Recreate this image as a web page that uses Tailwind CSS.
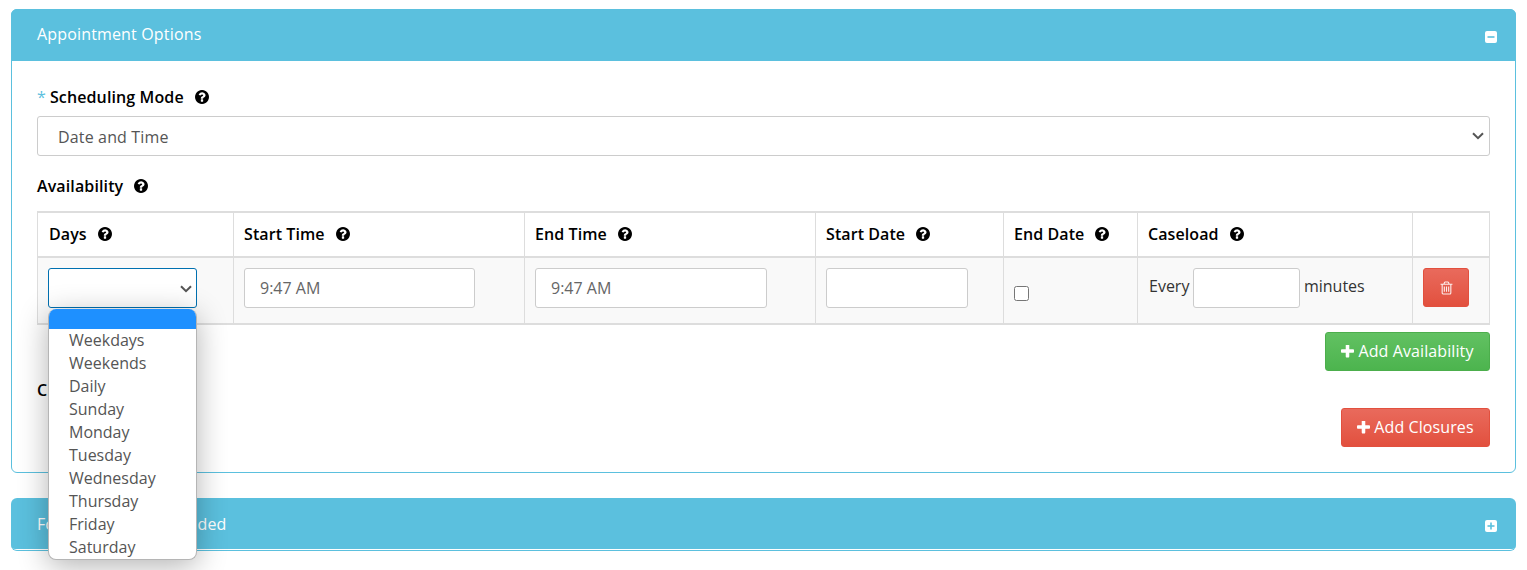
<!DOCTYPE html>
<html>
<head>
<meta charset="utf-8">
<script src="https://cdn.jsdelivr.net/npm/@tailwindcss/browser@4"></script>
</head>
<body class="bg-white font-['Open_Sans',sans-serif] text-[16px] text-black">
<div class="relative h-[570px] overflow-hidden px-[11px] pt-[9px]">

  <section class="w-[1505px] rounded-[6px] border border-[#5bc0de]">
    <header class="-m-px flex h-[52px] items-center justify-between rounded-t-[6px] bg-[#5bc0de] pb-[2px] pl-[26px] pr-[19px] text-white">
      <span class="tracking-[0.16px]">Appointment Options</span>
      <svg class="mt-[5px]" width="12" height="12" viewBox="0 0 12 12"><rect width="12" height="12" rx="2" fill="#fff"/><rect x="2.5" y="5.2" width="7" height="1.6" fill="#5bc0de"/></svg>
    </header>
    <div class="px-[25px] pt-[1px]">
      <div class="mt-[25px] flex h-[22px] items-center font-[550] tracking-[0.12px]">
        <span class="mr-[4px] font-normal text-[#5bc0de]">*</span>
        <span>Scheduling Mode</span>
        <svg class="ml-[11px]" width="14" height="14" viewBox="128 128 1536 1536"><path fill="#000" d="M1024 1376v-192q0-14-9-23t-23-9h-192q-14 0-23 9t-9 23v192q0 14 9 23t23 9h192q14 0 23-9t9-23zm256-672q0-88-55.5-163t-138.5-116-170-41q-243 0-371 213-15 24 8 42l132 100q7 6 19 6 16 0 25-12 53-68 86-92 34-24 86-24 48 0 85.5 26t37.5 59q0 38-20 61t-68 45q-63 28-115.5 86.5t-52.5 125.5v36q0 14 9 23t23 9h192q14 0 23-9t9-23q0-19 21.5-49.5t54.5-49.5q32-18 49-28.5t46-35 44.5-48 28-60.5 12.5-81zm384 192q0 209-103 385.5t-279.5 279.5-385.5 103-385.5-103-279.5-279.5-103-385.5 103-385.5 279.5-279.5 385.5-103 385.5 103 279.5 279.5 103 385.5z"/></svg>
      </div>
      <div class="relative mt-[8px] w-[1453px]">
        <select class="block h-[40px] w-full appearance-none rounded-[3px] border border-[#ccc] bg-white pl-[20px] pt-[2px] tracking-[0.15px] text-[#555]">
          <option>Date and Time</option>
        </select>
        <svg class="pointer-events-none absolute right-[6px] top-[16px]" width="12" height="8" viewBox="0 0 12 8"><path d="M1 1.2 6 6.2 11 1.2" fill="none" stroke="#555" stroke-width="2"/></svg>
      </div>
      <div class="mt-[19px] flex h-[22px] items-center font-[550] tracking-[0.12px]">
        <span>Availability</span>
        <svg class="ml-[11px]" width="14" height="14" viewBox="128 128 1536 1536"><path fill="#000" d="M1024 1376v-192q0-14-9-23t-23-9h-192q-14 0-23 9t-9 23v192q0 14 9 23t23 9h192q14 0 23-9t9-23zm256-672q0-88-55.5-163t-138.5-116-170-41q-243 0-371 213-15 24 8 42l132 100q7 6 19 6 16 0 25-12 53-68 86-92 34-24 86-24 48 0 85.5 26t37.5 59q0 38-20 61t-68 45q-63 28-115.5 86.5t-52.5 125.5v36q0 14 9 23t23 9h192q14 0 23-9t9-23q0-19 21.5-49.5t54.5-49.5q32-18 49-28.5t46-35 44.5-48 28-60.5 12.5-81zm384 192q0 209-103 385.5t-279.5 279.5-385.5 103-385.5-103-279.5-279.5-103-385.5 103-385.5 279.5-279.5 385.5-103 385.5 103 279.5 279.5 103 385.5z"/></svg>
      </div>

      <table class="mt-[14px] w-[1452px] table-fixed border-collapse">
        <colgroup>
          <col class="w-[196px]"><col class="w-[291px]"><col class="w-[291px]"><col class="w-[188px]"><col class="w-[134px]"><col class="w-[275px]"><col class="w-[77px]">
        </colgroup>
        <thead>
          <tr class="h-[45px] text-left tracking-[0.08px]">
            <th class="border-x border-t-2 border-b-2 border-[#ddd] pb-px pl-[11px] font-[550]"><span class="inline-flex items-center">Days<svg class="ml-[11px]" width="14" height="14" viewBox="128 128 1536 1536"><path fill="#000" d="M1024 1376v-192q0-14-9-23t-23-9h-192q-14 0-23 9t-9 23v192q0 14 9 23t23 9h192q14 0 23-9t9-23zm256-672q0-88-55.5-163t-138.5-116-170-41q-243 0-371 213-15 24 8 42l132 100q7 6 19 6 16 0 25-12 53-68 86-92 34-24 86-24 48 0 85.5 26t37.5 59q0 38-20 61t-68 45q-63 28-115.5 86.5t-52.5 125.5v36q0 14 9 23t23 9h192q14 0 23-9t9-23q0-19 21.5-49.5t54.5-49.5q32-18 49-28.5t46-35 44.5-48 28-60.5 12.5-81zm384 192q0 209-103 385.5t-279.5 279.5-385.5 103-385.5-103-279.5-279.5-103-385.5 103-385.5 279.5-279.5 385.5-103 385.5 103 279.5 279.5 103 385.5z"/></svg></span></th>
            <th class="border-x border-t-2 border-b-2 border-[#ddd] pb-px pl-[10px] font-[550]"><span class="inline-flex items-center">Start Time<svg class="ml-[11px]" width="14" height="14" viewBox="128 128 1536 1536"><path fill="#000" d="M1024 1376v-192q0-14-9-23t-23-9h-192q-14 0-23 9t-9 23v192q0 14 9 23t23 9h192q14 0 23-9t9-23zm256-672q0-88-55.5-163t-138.5-116-170-41q-243 0-371 213-15 24 8 42l132 100q7 6 19 6 16 0 25-12 53-68 86-92 34-24 86-24 48 0 85.5 26t37.5 59q0 38-20 61t-68 45q-63 28-115.5 86.5t-52.5 125.5v36q0 14 9 23t23 9h192q14 0 23-9t9-23q0-19 21.5-49.5t54.5-49.5q32-18 49-28.5t46-35 44.5-48 28-60.5 12.5-81zm384 192q0 209-103 385.5t-279.5 279.5-385.5 103-385.5-103-279.5-279.5-103-385.5 103-385.5 279.5-279.5 385.5-103 385.5 103 279.5 279.5 103 385.5z"/></svg></span></th>
            <th class="border-x border-t-2 border-b-2 border-[#ddd] pb-px pl-[10px] font-[550]"><span class="inline-flex items-center">End Time<svg class="ml-[11px]" width="14" height="14" viewBox="128 128 1536 1536"><path fill="#000" d="M1024 1376v-192q0-14-9-23t-23-9h-192q-14 0-23 9t-9 23v192q0 14 9 23t23 9h192q14 0 23-9t9-23zm256-672q0-88-55.5-163t-138.5-116-170-41q-243 0-371 213-15 24 8 42l132 100q7 6 19 6 16 0 25-12 53-68 86-92 34-24 86-24 48 0 85.5 26t37.5 59q0 38-20 61t-68 45q-63 28-115.5 86.5t-52.5 125.5v36q0 14 9 23t23 9h192q14 0 23-9t9-23q0-19 21.5-49.5t54.5-49.5q32-18 49-28.5t46-35 44.5-48 28-60.5 12.5-81zm384 192q0 209-103 385.5t-279.5 279.5-385.5 103-385.5-103-279.5-279.5-103-385.5 103-385.5 279.5-279.5 385.5-103 385.5 103 279.5 279.5 103 385.5z"/></svg></span></th>
            <th class="border-x border-t-2 border-b-2 border-[#ddd] pb-px pl-[10px] font-[550]"><span class="inline-flex items-center">Start Date<svg class="ml-[11px]" width="14" height="14" viewBox="128 128 1536 1536"><path fill="#000" d="M1024 1376v-192q0-14-9-23t-23-9h-192q-14 0-23 9t-9 23v192q0 14 9 23t23 9h192q14 0 23-9t9-23zm256-672q0-88-55.5-163t-138.5-116-170-41q-243 0-371 213-15 24 8 42l132 100q7 6 19 6 16 0 25-12 53-68 86-92 34-24 86-24 48 0 85.5 26t37.5 59q0 38-20 61t-68 45q-63 28-115.5 86.5t-52.5 125.5v36q0 14 9 23t23 9h192q14 0 23-9t9-23q0-19 21.5-49.5t54.5-49.5q32-18 49-28.5t46-35 44.5-48 28-60.5 12.5-81zm384 192q0 209-103 385.5t-279.5 279.5-385.5 103-385.5-103-279.5-279.5-103-385.5 103-385.5 279.5-279.5 385.5-103 385.5 103 279.5 279.5 103 385.5z"/></svg></span></th>
            <th class="border-x border-t-2 border-b-2 border-[#ddd] pb-px pl-[10px] font-[550]"><span class="inline-flex items-center">End Date<svg class="ml-[11px]" width="14" height="14" viewBox="128 128 1536 1536"><path fill="#000" d="M1024 1376v-192q0-14-9-23t-23-9h-192q-14 0-23 9t-9 23v192q0 14 9 23t23 9h192q14 0 23-9t9-23zm256-672q0-88-55.5-163t-138.5-116-170-41q-243 0-371 213-15 24 8 42l132 100q7 6 19 6 16 0 25-12 53-68 86-92 34-24 86-24 48 0 85.5 26t37.5 59q0 38-20 61t-68 45q-63 28-115.5 86.5t-52.5 125.5v36q0 14 9 23t23 9h192q14 0 23-9t9-23q0-19 21.5-49.5t54.5-49.5q32-18 49-28.5t46-35 44.5-48 28-60.5 12.5-81zm384 192q0 209-103 385.5t-279.5 279.5-385.5 103-385.5-103-279.5-279.5-103-385.5 103-385.5 279.5-279.5 385.5-103 385.5 103 279.5 279.5 103 385.5z"/></svg></span></th>
            <th class="border-x border-t-2 border-b-2 border-[#ddd] pb-px pl-[10px] font-[550]"><span class="inline-flex items-center">Caseload<svg class="ml-[11px]" width="14" height="14" viewBox="128 128 1536 1536"><path fill="#000" d="M1024 1376v-192q0-14-9-23t-23-9h-192q-14 0-23 9t-9 23v192q0 14 9 23t23 9h192q14 0 23-9t9-23zm256-672q0-88-55.5-163t-138.5-116-170-41q-243 0-371 213-15 24 8 42l132 100q7 6 19 6 16 0 25-12 53-68 86-92 34-24 86-24 48 0 85.5 26t37.5 59q0 38-20 61t-68 45q-63 28-115.5 86.5t-52.5 125.5v36q0 14 9 23t23 9h192q14 0 23-9t9-23q0-19 21.5-49.5t54.5-49.5q32-18 49-28.5t46-35 44.5-48 28-60.5 12.5-81zm384 192q0 209-103 385.5t-279.5 279.5-385.5 103-385.5-103-279.5-279.5-103-385.5 103-385.5 279.5-279.5 385.5-103 385.5 103 279.5 279.5 103 385.5z"/></svg></span></th>
            <th class="border-x border-t-2 border-b-2 border-[#ddd]"></th>
          </tr>
        </thead>
        <tbody>
          <tr class="h-[67px] bg-[#f9f9f9]">
            <td class="border-x border-b-2 border-[#ddd] pl-[10px] align-top pt-[10px]">
              <div class="relative w-[149px]">
                <select class="block h-[40px] w-full appearance-none rounded-[3px] border border-[#0070b0] bg-white"><option></option></select>
                <svg class="pointer-events-none absolute right-[5px] top-[17px]" width="12" height="8" viewBox="0 0 12 8"><path d="M1 1.2 6 6.2 11 1.2" fill="none" stroke="#555" stroke-width="2"/></svg>
              </div>
            </td>
            <td class="border-x border-b-2 border-[#ddd] pl-[10px] align-top pt-[10px]">
              <input type="text" value="9:47 AM" class="block h-[40px] w-[231px] rounded-[3px] border border-[#ccc] bg-white pl-[15px] text-[#666]">
            </td>
            <td class="border-x border-b-2 border-[#ddd] pl-[10px] align-top pt-[10px]">
              <input type="text" value="9:47 AM" class="block h-[40px] w-[232px] rounded-[3px] border border-[#ccc] bg-white pl-[15px] text-[#666]">
            </td>
            <td class="border-x border-b-2 border-[#ddd] pl-[10px] align-top pt-[10px]">
              <input type="text" class="block h-[40px] w-[142px] rounded-[3px] border border-[#ccc] bg-white">
            </td>
            <td class="border-x border-b-2 border-[#ddd] pl-[10px] align-top pt-[28px]">
              <input type="checkbox" class="block h-[15px] w-[15px]">
            </td>
            <td class="border-x border-b-2 border-[#ddd] pl-[11px] align-top pt-[10px]">
              <div class="flex items-start text-[#333]">
                <span class="mt-[6px]">Every</span>
                <input type="text" class="ml-[4px] mr-[4px] block h-[40px] w-[107px] rounded-[3px] border border-[#ccc] bg-white">
                <span class="mt-[6px] -ml-[0.5px]">minutes</span>
              </div>
            </td>
            <td class="border-x border-b-2 border-[#ddd] pl-[10px] align-top pt-[10px]">
              <button class="flex h-[39px] w-[46px] items-center justify-center rounded-[3px] border border-[#e2503e] bg-gradient-to-b from-[#e96a5c] to-[#e2503e]">
                <svg width="13" height="14" viewBox="128 128 1536 1536"><path fill="#fff" fill-opacity=".9" d="M704 736v576q0 14-9 23t-23 9h-64q-14 0-23-9t-9-23v-576q0-14 9-23t23-9h64q14 0 23 9t9 23zm256 0v576q0 14-9 23t-23 9h-64q-14 0-23-9t-9-23v-576q0-14 9-23t23-9h64q14 0 23 9t9 23zm256 0v576q0 14-9 23t-23 9h-64q-14 0-23-9t-9-23v-576q0-14 9-23t23-9h64q14 0 23 9t9 23zm128 724v-948h-896v948q0 22 7 40.5t14.5 27 10.5 8.5h832q3 0 10.5-8.5t14.5-27 7-40.5zm-672-1076h448l-48-117q-7-9-17-11h-317q-10 2-17 11zm928 32v64q0 14-9 23t-23 9h-96v948q0 83-47 143.5t-113 60.5h-832q-66 0-113-58.5t-47-141.5v-952h-96q-14 0-23-9t-9-23v-64q0-14 9-23t23-9h309l70-167q15-37 54-63t79-26h320q40 0 79 26t54 63l70 167h309q14 0 23 9t9 23z"/></svg>
              </button>
            </td>
          </tr>
        </tbody>
      </table>

      <div class="mt-[7px] flex justify-end">
        <button class="flex h-[39px] w-[165px] items-center justify-center gap-[4px] rounded-[3px] border border-[#4cae4c] bg-gradient-to-b from-[#62c162] to-[#4cb44e] pb-[2px] tracking-[0.1px] text-white">
          <svg class="mt-[2px]" width="13" height="13" viewBox="192 192 1408 1408"><path fill="#fff" d="M1600 736v192q0 40-28 68t-68 28h-416v416q0 40-28 68t-68 28h-192q-40 0-68-28t-28-68v-416h-416q-40 0-68-28t-28-68v-192q0-40 28-68t68-28h416v-416q0-40 28-68t68-28h192q40 0 68 28t28 68v416h416q40 0 68 28t28 68z"/></svg>
          <span>Add Availability</span>
        </button>
      </div>
      <div class="mt-[8px] flex h-[22px] items-center font-[550]">Closures</div>
      <div class="mt-[7px] flex justify-end pb-[25px]">
        <button class="flex h-[39px] w-[149px] items-center justify-center gap-[4px] rounded-[3px] border border-[#e2503e] bg-gradient-to-b from-[#e96a5c] to-[#e2503e] pb-[2px] tracking-[0.1px] text-white">
          <svg class="mt-[2px]" width="13" height="13" viewBox="192 192 1408 1408"><path fill="#fff" d="M1600 736v192q0 40-28 68t-68 28h-416v416q0 40-28 68t-68 28h-192q-40 0-68-28t-28-68v-416h-416q-40 0-68-28t-28-68v-192q0-40 28-68t68-28h416v-416q0-40 28-68t68-28h192q40 0 68 28t28 68v416h416q40 0 68 28t28 68z"/></svg>
          <span>Add Closures</span>
        </button>
      </div>
    </div>
  </section>

  <section class="mt-[25px] w-[1505px] rounded-[6px] border-b border-[#5bc0de] pb-px">
    <header class="flex h-[51px] items-center justify-between rounded-t-[6px] rounded-b-[4px] bg-[#5bc0de] pl-[26px] pr-[19px] text-white">
      <span class="tracking-[0.06px]">Forms to be Downloaded</span>
      <svg class="mt-[4px]" width="12" height="12" viewBox="0 0 12 12"><rect width="12" height="12" rx="2" fill="#fff"/><rect x="2.5" y="5.2" width="7" height="1.6" fill="#5bc0de"/><rect x="5.2" y="2.5" width="1.6" height="7" fill="#5bc0de"/></svg>
    </header>
  </section>

  <div class="absolute left-[48px] top-[309px] h-[251px] w-[149px] overflow-hidden rounded-[8px] border border-[#b5b5b5] border-t-0 bg-white pb-px text-[#555] shadow-[0_6px_30px_rgba(0,0,0,0.3)]">
    <div class="h-[20px] bg-[#1e90ff]"></div>
    <ul class="pl-[20px] leading-[23px]">
      <li>Weekdays</li>
      <li>Weekends</li>
      <li>Daily</li>
      <li>Sunday</li>
      <li>Monday</li>
      <li>Tuesday</li>
      <li>Wednesday</li>
      <li>Thursday</li>
      <li>Friday</li>
      <li>Saturday</li>
    </ul>
  </div>
</div>
</body>
</html>
